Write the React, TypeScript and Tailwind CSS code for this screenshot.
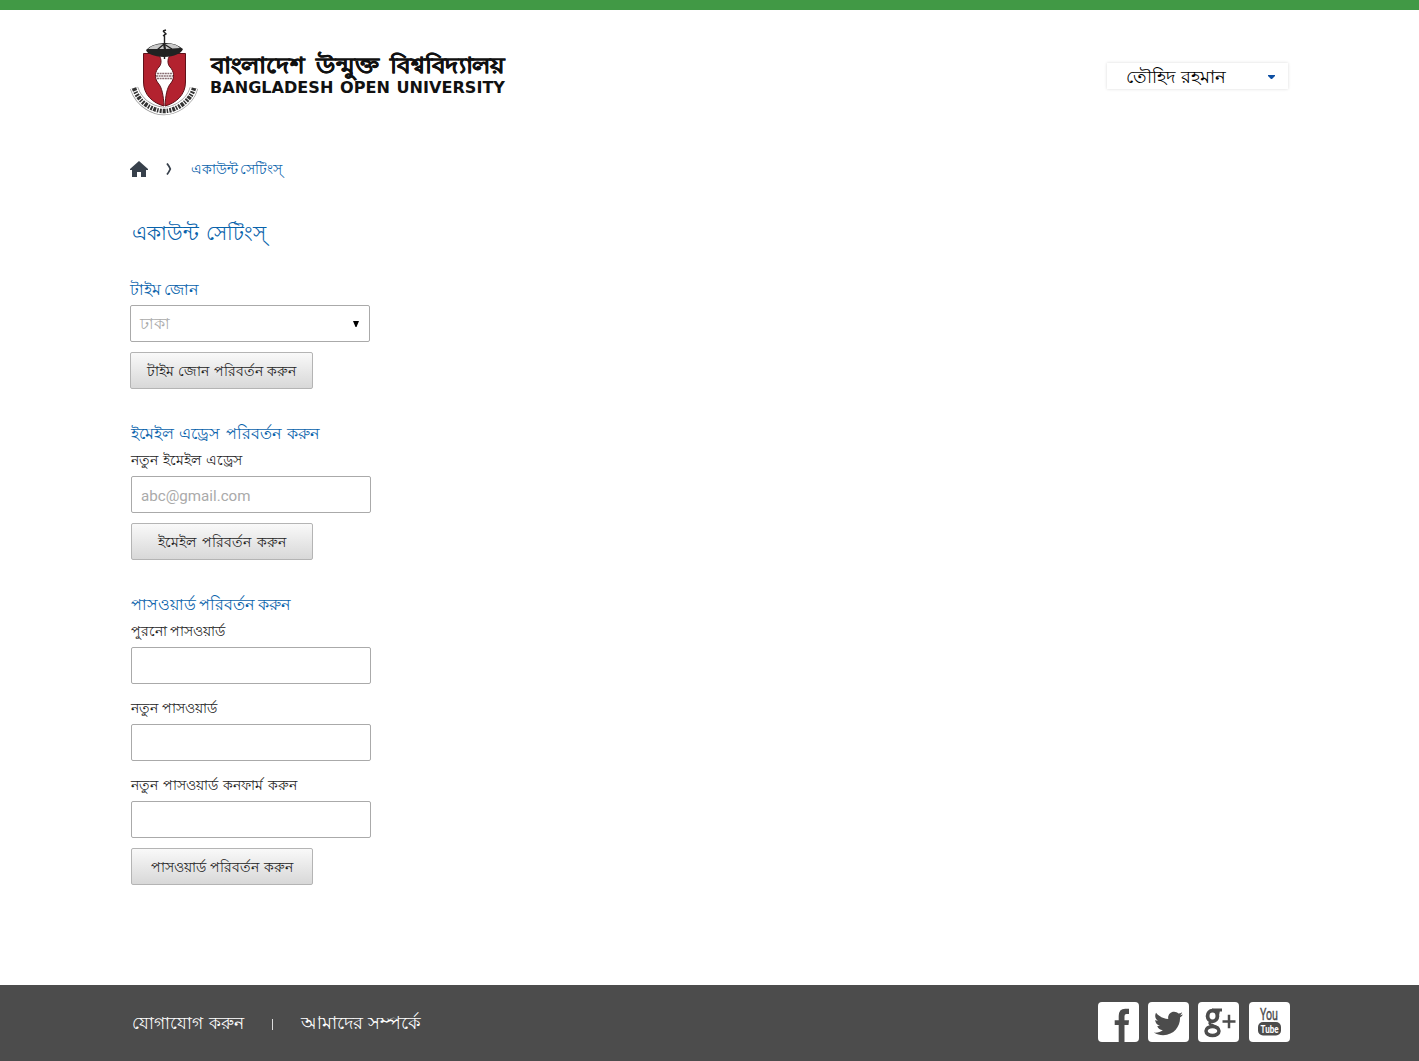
import type { ReactNode } from "react";
import { FaTwitter } from "react-icons/fa";

function Emblem() {
  return (
    <svg width="76" height="94" viewBox="0 0 76 94" className="block">
      <path d="M8 62 Q12 74 22 80 Q38 90 54 80 Q65 73 68 62" fill="none" stroke="#999" strokeWidth="8.500" />
      <path d="M8 62 Q12 74 22 80 Q38 90 54 80 Q65 73 68 62" fill="none" stroke="#fff" strokeWidth="7" />
      <path d="M8 62 Q12 74 22 80 Q38 90 54 80 Q65 73 68 62" fill="none" stroke="#333" strokeWidth="4.500" strokeDasharray="3 1 1.500 1.200 2 1" />
      <path d="M17 27H60V56C60 69 50 78 38.500 81C27 78 17 69 17 56Z" fill="#fff" />
      <path d="M17.500 27.500H31C36 31 36 38 33 41C29 45 28 52 32 57C36 61 37.500 70 38 80C27 77 17.500 69 17.500 56Z" fill="#b3222f" stroke="#5f1119" />
      <path d="M59.500 27.500H46C41 31 41 38 44 41C48 45 49 52 45 57C41 61 39.500 70 39 80C50 77 59.500 69 59.500 56Z" fill="#b3222f" stroke="#5f1119" />
      <path d="M31 47.500h15M30 50h17M31 52.500h15" stroke="#8a6f74" strokeWidth="1.400" strokeDasharray="2 .6" />
      <path d="M20 24 Q22 30 38 31 Q54 30 57 23 Q49 16 38 17 Q25 18 20 24Z" fill="#222" />
      <path d="M22 23 Q27 18 37 18 L38 23ZM39 18 Q49 17 54 22 L40 23Z" fill="#c9c9c9" />
      <path d="M38.500 8v25M31 24l7-6 8 5M37 5l3-1M37 5l3 3-3 2" fill="none" stroke="#222" strokeWidth="1.400" />
    </svg>
  );
}

function Logo() {
  return (
    <div className="flex">
      <Emblem />
      <svg width="320" height="94" viewBox="0 0 320 94" className="block" fontWeight="700">
        <text x="9" y="47" fontSize="22" wordSpacing="5" fontFamily="Noto Sans, sans-serif" textLength="294" lengthAdjust="spacingAndGlyphs" fill="#111" stroke="#111" strokeWidth=".4">বাংলাদেশ উন্মুক্ত বিশ্ববিদ্যালয়</text>
        <text x="8" y="67" fontSize="15" wordSpacing="1" fontFamily="DejaVu Sans, sans-serif" textLength="295" lengthAdjust="spacingAndGlyphs" fill="#111">BANGLADESH OPEN UNIVERSITY</text>
      </svg>
    </div>
  );
}

function Button({ children, className = "" }: { children: ReactNode; className?: string }) {
  return (
    <button className={`h-[37px] rounded-[2px] border border-[#b4b4b4] bg-linear-to-b from-[#f9f9f9] to-[#d8d8d8] pt-px text-center text-[14.300px] leading-[35px] [word-spacing:1px] whitespace-nowrap text-[#222] ${className}`}>
      {children}
    </button>
  );
}

function Label({ children, className = "" }: { children: ReactNode; className?: string }) {
  return <label className={`block text-[14.200px] leading-[30px] text-[#222] ${className}`}>{children}</label>;
}

const field = "block h-[37px] w-[240px] rounded-[2px] border border-[#aaa] bg-white outline-none";
const heading = "pt-px leading-6 text-[#0762ab]";

function SocialIcon({ label, children }: { label: string; children: ReactNode }) {
  return (
    <a aria-label={label} className="flex h-10 w-[41px] items-center justify-center overflow-hidden rounded-[4px] bg-white text-[#4c4c4c] last:ml-px">
      {children}
    </a>
  );
}

export default function App() {
  return (
    <div className="flex h-[1061px] flex-col bg-white font-['Roboto','Noto_Sans',sans-serif]">
      <div className="h-[10px] bg-[#419945]" />
      <header className="flex h-[140px] items-start justify-between pt-4 pr-[131px] pl-[126px]">
        <Logo />
        <div className="mt-[37px] flex h-[26px] w-[181px] items-center justify-between bg-white pr-[13px] pl-[19px] text-[18.200px] leading-[26px] text-black shadow-[0_0_3px_rgba(0,0,0,0.15)]">
          <span className="mt-px whitespace-nowrap [word-spacing:1.500px]">তৌহিদ রহমান</span>
          <svg width="7" height="4" viewBox="0 0 7 4" className="mt-px"><path d="M0 0h7v1L4 4H3L0 1z" fill="#0d4fa3" /></svg>
        </div>
      </header>

      <main className="flex-1 pl-[130px]">
        <nav className="flex h-[38px] items-center">
          <svg width="18" height="16" viewBox="0 0 18 16"><path d="M9 0L0 8v1h2v7h5v-5h4v5h5V9h2V8z" fill="#37404b" /></svg>
          <svg width="6" height="12" viewBox="0 0 6 12" className="ml-[18px]"><path d="M1 .5Q3 3 4.300 6Q3 9 1 11.500" fill="none" stroke="#37404b" strokeWidth="1.800" /></svg>
          <span className="ml-[19px] text-[13.600px] [word-spacing:-1px] text-[#0762ab]">একাউন্ট সেটিংস্</span>
        </nav>
        <h1 className="mt-[25px] ml-[2px] h-[39px] text-[20.400px] leading-[40px] [word-spacing:2px] text-[#0762ab]">একাউন্ট সেটিংস্</h1>

        <section className="mt-[25px]">
          <h2 className={`h-7 text-[15.900px] [word-spacing:-0.500px] ${heading}`}>টাইম জোন</h2>
          <div className={`${field} flex items-center justify-between pr-[10px] pl-[9px] text-[15.500px] text-[#aaa]`}>
            <span className="pt-[3px]">ঢাকা</span>
            <svg width="6" height="6" viewBox="0 0 6 6"><path d="M0 0h6L3.500 6h-1z" fill="#000" /></svg>
          </div>
          <Button className="mt-[10px] w-[183px]">টাইম জোন পরিবর্তন করুন</Button>
        </section>

        <section className="mt-8 ml-px">
          <h2 className={`h-6 text-[16px] [word-spacing:1.500px] ${heading}`}>ইমেইল এড্রেস পরিবর্তন করুন</h2>
          <Label className="h-[31px] [word-spacing:1.500px]">নতুন ইমেইল এড্রেস</Label>
          <input className={`${field} pt-[2px] pl-[9px] text-[15.150px] placeholder:text-[#aaa]`} placeholder="abc@gmail.com" />
          <Button className="mt-[10px] w-[182px] [word-spacing:2px]">ইমেইল পরিবর্তন করুন</Button>
        </section>

        <section className="mt-8 ml-px">
          <h2 className={`h-6 text-[15.900px] [word-spacing:-1px] ${heading}`}>পাসওয়ার্ড পরিবর্তন করুন</h2>
          <Label className="h-[31px] [word-spacing:-1px]">পুরনো পাসওয়ার্ড</Label>
          <input type="password" className={field} />
          <Label className="mt-[9px] h-[31px]">নতুন পাসওয়ার্ড</Label>
          <input type="password" className={field} />
          <Label className="mt-[9px] h-[31px] [word-spacing:1.500px]">নতুন পাসওয়ার্ড কনফার্ম করুন</Label>
          <input type="password" className={field} />
          <Button className="mt-[10px] w-[182px]">পাসওয়ার্ড পরিবর্তন করুন</Button>
        </section>
      </main>

      <footer className="flex h-[76px] shrink-0 items-center justify-between bg-[#4c4c4c] pr-[129px] pb-[2px] pl-[132px] text-white">
        <div className="flex items-center pt-[3px] text-[17.600px] whitespace-nowrap">
          <a className="w-[112px] text-[17.300px] [word-spacing:1.500px]">যোগাযোগ করুন</a>
          <span className="mt-[3px] ml-7 h-[11px] w-px bg-[#ddd]" />
          <a className="ml-7 [word-spacing:0.500px]">আমাদের সম্পর্কে</a>
        </div>
        <div className="flex gap-[9px]">
          <SocialIcon label="Facebook">
            <svg width="41" height="40" viewBox="0 0 41 40"><path d="M20.700 40V23h-4v-4.700h4V14q0-7.300 6.500-7.300H31V12h-2.500q-2 0-2 2v4.300H31L30.500 23h-4v17z" fill="currentColor" /></svg>
          </SocialIcon>
          <SocialIcon label="Twitter"><FaTwitter size={29} className="mt-[2px]" /></SocialIcon>
          <SocialIcon label="Google Plus">
            <svg width="41" height="40" viewBox="0 0 41 40" fill="none" stroke="currentColor">
              <ellipse cx="14.500" cy="14" rx="4.900" ry="5.300" strokeWidth="3.800" />
              <ellipse cx="14.500" cy="29" rx="6.500" ry="4.600" strokeWidth="3.500" />
              <path d="M14 8h10M20.500 9l-1 5M13 19q-3 3 1 4l6 3" strokeWidth="2.800" />
              <path d="M24.500 19.500H37.500M31 12.700v13.600" strokeWidth="2.500" />
            </svg>
          </SocialIcon>
          <SocialIcon label="YouTube">
            <svg width="41" height="40" viewBox="0 0 41 40" fontFamily="Roboto" textAnchor="middle">
              <text x="20" y="17.500" fontSize="17" textLength="18" lengthAdjust="spacingAndGlyphs" fill="currentColor" stroke="currentColor" strokeWidth=".4">You</text>
              <rect x="9" y="20" width="23" height="13.500" rx="5" fill="currentColor" />
              <text x="20.500" y="31" fontSize="10.500" fontWeight="700" textLength="18" lengthAdjust="spacingAndGlyphs" fill="#fff">Tube</text>
            </svg>
          </SocialIcon>
        </div>
      </footer>
    </div>
  );
}
